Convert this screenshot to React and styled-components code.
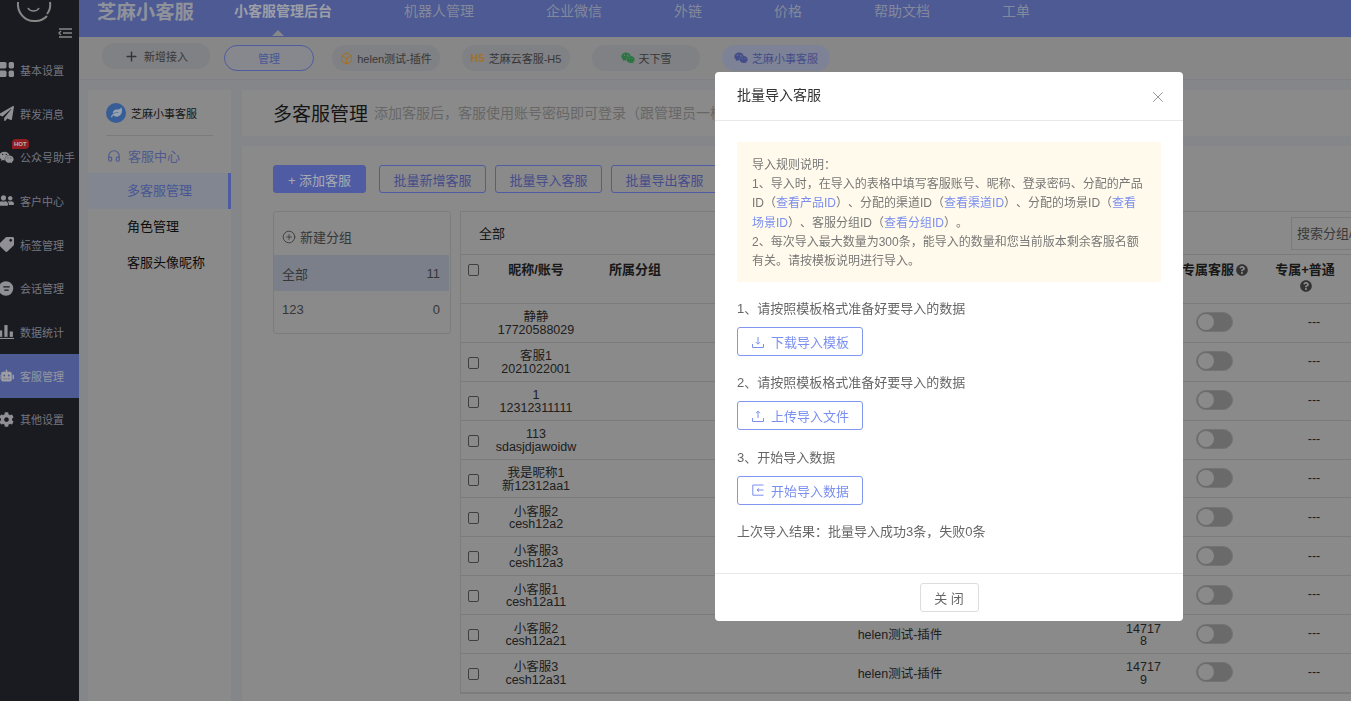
import React from 'react'
import styled, { createGlobalStyle } from 'styled-components'
import {
  FaPaperPlane, FaWeixin, FaUserFriends, FaTag, FaRobot, FaCog, FaLeaf, FaQuestionCircle,
} from 'react-icons/fa'
import { CirclePlus, Box, X, Headphones, Plus } from 'lucide-react'

const GlobalStyle = createGlobalStyle`
  html, body {
    margin: 0;
    height: 100%;
    overflow: hidden;
    font-family: "Liberation Sans", "Noto Sans CJK SC", sans-serif;
    color: #333;
    text-spacing-trim: space-all;
  }
  * { box-sizing: border-box; }
`

const Page = styled.div`
  display: flex;
  height: 100vh;
  overflow: hidden;
  background: #b8b8b8;
`

const Sidebar = styled.aside`
  width: 79px;
  flex: none;
  background: #23242b;
  overflow: hidden;
`

const SideLogo = styled.svg`
  display: block;
`

const MenuItem = styled.div`
  position: relative;
  display: flex;
  align-items: center;
  height: 43.7px;
  font-size: 11px;
  white-space: nowrap;
  color: ${p => (p.$active ? '#c4c8d8' : '#9a9daa')};
  background: ${p => (p.$active ? '#6779c5' : 'transparent')};

  svg {
    flex: none;
    width: 15px;
    height: 15px;
    margin: 0 6px 0 -1px;
    color: ${p => (p.$active ? '#d5d5d8' : '#c0c0c6')};
  }
`

const Hot = styled.span`
  position: absolute;
  left: 12px;
  top: 4px;
  padding: 1px 2px;
  border-radius: 4px 4px 4px 0;
  background: #c0282c;
  color: #eee;
  font-size: 6px;
  line-height: 8px;
  font-weight: 700;
`

const Main = styled.div`
  flex: 1;
  min-width: 0;
  display: flex;
  flex-direction: column;
`

const TopBar = styled.header`
  height: 37px;
  flex: none;
  display: flex;
  padding: 0 0 17px 18px;
  align-items: center;
  background: #6779c5;
  color: #c6c9d6;
`

const Brand = styled.div`
  font-size: 19.4px;
  font-weight: 700;
  margin-right: 40px;
  white-space: nowrap;
  color: #bfc2cf;
`

const NavLink = styled.a`
  position: relative;
  font-size: 14px;
  margin-right: 72px;
  white-space: nowrap;
  font-weight: ${p => (p.$active ? 700 : 400)};
  color: ${p => (p.$active ? '#d0d2de' : '#b0b6d0')};

  ${p => p.$active && `
    &::after {
      content: '';
      position: absolute;
      left: 38px;
      top: 30px;
      border: 6px solid transparent;
      border-top: 0;
      border-bottom-color: #b4b4b4;
    }
  `}
`

const TabBar = styled.div`
  height: 43px;
  flex: none;
  display: flex;
  align-items: flex-start;
  padding-left: 23px;
  background: #b4b4b4;
  border-bottom: 1px solid #a9aeb5;
`

const Pill = styled.div`
  display: flex;
  align-items: center;
  justify-content: center;
  gap: 4px;
  width: ${p => p.$width || 108}px;
  height: 26px;
  margin-top: ${p => p.$top ?? 8}px;
  margin-right: ${p => p.$after ?? 22}px;
  border-radius: 13px;
  font-size: 11px;
  white-space: nowrap;
  background: ${p => (p.$tone === 'selected' ? '#a7aec8' : '#abacb0')};
  color: ${p => (p.$tone === 'selected' ? '#5a67b8' : '#4a4a4a')};

  ${p => p.$outlined && `
    background: #b4b6bd;
    border: 1px solid #6a7ad8;
    color: #6273c8;
  `}

  & > svg.plus { margin-right: 1px; color: #444; }
`

const H5Mark = styled.span`
  color: #d69a3a;
  font-weight: 700;
  font-size: 11px;
`

const Body = styled.div`
  flex: 1;
  min-height: 0;
  display: flex;
  gap: 11px;
  padding: 10px 0 0 9px;
  background: #b0b3b8;
`

const SideNav = styled.nav`
  width: 143px;
  flex: none;
  background: #b8b8b8;
`

const Account = styled.div`
  display: flex;
  align-items: center;
  gap: 5px;
  height: 46px;
  margin: 0 18px;
  border-bottom: 1px solid #a3a5a8;
  font-size: 11px;
  white-space: nowrap;
  color: #222;
`

const LeafBadge = styled.span`
  width: 20px;
  height: 20px;
  border-radius: 50%;
  display: flex;
  align-items: center;
  justify-content: center;
  background: #4a7cc8;
  color: #c8d6e8;
  font-size: 11px;
`

const SideHeading = styled.div`
  display: flex;
  align-items: center;
  gap: 7px;
  height: 37px;
  padding: 2px 0 0 19px;
  font-size: 13px;
  color: #6a78c0;
`

const SideLink = styled.div`
  height: 36px;
  line-height: 36px;
  padding-left: 39px;
  font-size: 13px;
  color: ${p => (p.$active ? '#6273c8' : '#111')};
  background: ${p => (p.$active ? '#adb3c1' : 'transparent')};
  border-right: ${p => (p.$active ? '3px solid #6a7ad8' : '0')};
`

const Content = styled.div`
  flex: 1;
  min-width: 0;
  display: flex;
  flex-direction: column;
  gap: 10px;
`

const TitleCard = styled.div`
  height: 46px;
  flex: none;
  display: flex;
  align-items: center;
  gap: 6px;
  padding: 0 0 2px 31px;
  background: #b8b8b8;
  white-space: nowrap;
  overflow: hidden;
`

const Title = styled.h1`
  margin: 0;
  font-size: 19px;
  font-weight: 400;
  color: #1c1c1c;
`

const Subtitle = styled.span`
  font-size: 14px;
  color: #8a8a8a;
`

const Card = styled.div`
  flex: 1;
  min-height: 0;
  padding: 19px 0 0 31px;
  background: #b8b8b8;
  overflow: hidden;
`

const Actions = styled.div`
  display: flex;
  gap: 9px;
  margin-bottom: 18px;
`

const ActionButton = styled.button`
  height: 28px;
  width: ${p => (p.$primary ? 93 : 107)}px;
  margin-right: ${p => (p.$primary ? 4 : 0)}px;
  padding: 0;
  font: inherit;
  font-size: 13px;
  border-radius: 3px;
  border: 1px solid #6a7ad8;
  background: ${p => (p.$primary ? '#6a7ad8' : 'transparent')};
  color: ${p => (p.$primary ? '#dfe2ee' : '#5a67b8')};
`

const Panels = styled.div`
  display: flex;
  align-items: flex-start;
  gap: 9px;
`

const GroupPanel = styled.div`
  width: 178px;
  height: 123px;
  flex: none;
  border: 1px solid #a7a7a7;
  border-radius: 3px;
`

const NewGroup = styled.div`
  display: flex;
  align-items: center;
  gap: 4px;
  height: 43px;
  padding: 6px 0 0 8px;
  font-size: 13px;
  color: #4a4a4a;
`

const GroupRow = styled.div`
  display: flex;
  justify-content: space-between;
  align-items: center;
  height: 36px;
  margin-right: 1px;
  padding: 0 9px 0 8px;
  font-size: 13px;
  color: #4a4a4a;
  background: ${p => (p.$active ? '#a5aab9' : 'transparent')};
`

const TablePanel = styled.div`
  flex: 1;
  min-width: 0;
  border: 1px solid #a7a7a7;
  border-right: 0;
  overflow: hidden;
`

const TableTop = styled.div`
  height: 42px;
  display: flex;
  align-items: center;
  justify-content: space-between;
  padding: 0 0 2px 18px;
  font-size: 13px;
  color: #222;
`

const SearchInput = styled.input`
  width: 80px;
  height: 33px;
  flex: none;
  margin: 2px -20px 0 0;
  padding: 0 5px;
  background: transparent;
  border: 1px solid #a4a4a4;
  font: inherit;
  font-size: 13px;

  &::placeholder { color: #4e4e4e; opacity: 1; }
`

const Table = styled.table`
  width: 890px;
  table-layout: fixed;
  border-collapse: collapse;
  font-size: 12.5px;
`

const Th = styled.th`
  height: 49px;
  padding: 7px ${p => (p.$shift ? 6 : 0)}px 0 0;
  vertical-align: top;
  text-align: center;
  font-size: 13px;
  line-height: 16px;
  font-weight: 700;
  color: #222;
  border-top: 1px solid #a4a4a4;
  border-bottom: 1px solid #a4a4a4;
`

const Td = styled.td`
  height: 38.9px;
  padding: 2px ${p => (p.$narrow ? 4 : 0)}px 0 ${p => (p.$narrow ? 4 : 0)}px;
  text-align: center;
  line-height: 12.5px;
  color: #2a2a2a;
  border-bottom: 1px solid #a4a4a4;
  word-break: break-all;
`

const ToggleCell = styled(Td)`
  padding: 0 1px 1px 0;
`

const DashCell = styled(Td)`
  padding: 0 0 1px 12px;
`

const Check = styled.input.attrs({ type: 'checkbox' })`
  appearance: none;
  display: block;
  width: 11px;
  height: 12px;
  margin: ${p => (p.$head ? 2 : 0)}px 0 0 7px;
  border: 1px solid #555;
  border-radius: 2px;
  background: transparent;
`

const Hint = styled(FaQuestionCircle)`
  width: 12px;
  height: 12px;
  color: #444;
  vertical-align: -2px;
  margin-left: 2px;
`

const Toggle = styled.span`
  display: block;
  width: 37px;
  height: 20px;
  margin: 0 auto;
  padding: 1px;
  border-radius: 10px;
  background: #8e8e8e;
  border: 1px solid #9a9a9a;

  &::before {
    content: '';
    display: block;
    width: 16px;
    height: 16px;
    border-radius: 50%;
    background: #b8b8b8;
  }
`

const Mask = styled.div`
  position: fixed;
  inset: 0;
  padding: 72px 0 0 715px;
  background: rgba(0, 0, 0, 0.25);
`

const Modal = styled.div`
  width: 468px;
  height: 549px;
  display: flex;
  flex-direction: column;
  border-radius: 4px;
  background: #fff;
  overflow: hidden;
`

const ModalHead = styled.div`
  display: flex;
  align-items: center;
  justify-content: space-between;
  height: 49px;
  flex: none;
  padding: 0 16px 4px 22px;
  border-bottom: 1px solid #e8e8e8;
  font-size: 14px;
  color: #333;

  svg { width: 18px; height: 18px; margin-top: 5px; color: #8a8a8a; }
`

const ModalBody = styled.div`
  flex: 1;
  padding: 21px 22px 0;
`

const Notice = styled.div`
  height: 140px;
  padding: 14px 15px 0;
  margin-bottom: 18px;
  background: #fffaeb;
  font-size: 12px;
  line-height: 19.2px;
  color: #777;
`

const Link = styled.a`
  color: #7b8ff0;
`

const StepText = styled.div`
  font-size: 13px;
  line-height: 18px;
  color: #666;
`

const StepButton = styled.button`
  display: flex;
  align-items: center;
  gap: 7px;
  width: 126px;
  height: 29px;
  margin: 9px 0 18.3px;
  padding: 0 0 0 14px;
  background: #fff;
  border: 1px solid #8096f0;
  border-radius: 3px;
  font: inherit;
  font-size: 13px;
  white-space: nowrap;
  color: #7b8ff0;

  svg { width: 12px; height: 12px; flex: none; }
`

const ModalFoot = styled.div`
  height: 48px;
  flex: none;
  display: flex;
  justify-content: center;
  padding-top: 9px;
  border-top: 1px solid #e8e8e8;
`

const CloseButton = styled.button`
  width: 59px;
  height: 29px;
  background: #fff;
  border: 1px solid #ddd;
  border-radius: 3px;
  font: inherit;
  font-size: 13px;
  color: #666;
`

const GridIcon = () => (
  <svg viewBox="0 0 14 14" fill="currentColor">
    <rect x="-1" y="0" width="8" height="6" rx="1.5" />
    <rect x="-1" y="8" width="8" height="6" rx="1.5" />
    <rect x="9" y="0" width="5" height="6" rx="1.5" />
    <rect x="9" y="8" width="5" height="6" rx="1.5" />
  </svg>
)

const ChatIcon = () => (
  <svg viewBox="0 0 14 14">
    <circle cx="6.5" cy="7" r="6.8" fill="currentColor" />
    <path d="M4 5.5h6M5 8.5h4" stroke="#23242b" strokeWidth="1.2" />
  </svg>
)

const ChartIcon = () => (
  <svg viewBox="0 0 14 14" fill="currentColor">
    <rect x="0" y="6" width="3" height="6" />
    <rect x="5" y="1" width="3" height="11" />
    <rect x="10" y="7" width="3" height="5" />
    <rect x="0" y="13" width="14" height="1" />
  </svg>
)

const DownloadIcon = () => (
  <svg viewBox="0 0 12 12" fill="none" stroke="currentColor">
    <path d="M.5 8v3.5h11V8M6 1v7M4 6.2 6 8.2l2-2" />
  </svg>
)

const UploadIcon = () => (
  <svg viewBox="0 0 12 12" fill="none" stroke="currentColor">
    <path d="M.5 8v3.5h11V8M6 8V1.2M4 3.2l2-2 2 2" />
  </svg>
)

const ImportIcon = () => (
  <svg viewBox="0 0 12 12" fill="none" stroke="currentColor">
    <path d="M11.5 1H.8v10.2h10.7M11.5 6H5M7 4.4 5 6l2 1.6" />
  </svg>
)

const menu = [
  { label: '基本设置', icon: <GridIcon /> },
  { label: '群发消息', icon: <FaPaperPlane /> },
  { label: '公众号助手', icon: <FaWeixin />, hot: true },
  { label: '客户中心', icon: <FaUserFriends /> },
  { label: '标签管理', icon: <FaTag style={{ transform: 'scaleX(-1)' }} /> },
  { label: '会话管理', icon: <ChatIcon /> },
  { label: '数据统计', icon: <ChartIcon /> },
  { label: '客服管理', icon: <FaRobot />, active: true },
  { label: '其他设置', icon: <FaCog /> },
]

const links = ['机器人管理', '企业微信', '外链', '价格', '帮助文档', '工单']

// the modal hides the middle columns of the first rows
const rows = [
  { name: '静静', account: '17720588029', noCheck: true },
  { name: '客服1', account: '2021022001' },
  { name: '1', account: '12312311111' },
  { name: '113', account: 'sdasjdjawoidw' },
  { name: '我是昵称1', account: '新12312aa1' },
  { name: '小客服2', account: 'cesh12a2' },
  { name: '小客服3', account: 'cesh12a3' },
  { name: '小客服1', account: 'cesh12a11' },
  { name: '小客服2', account: 'cesh12a21', group: 'helen测试-插件', id: '147178' },
  { name: '小客服3', account: 'cesh12a31', group: 'helen测试-插件', id: '147179' },
]

const colWidths = [26, 98, 100, 130, 170, 137, 43, 100, 86]

export default function App() {
  return (
    <Page>
      <GlobalStyle />
      <Sidebar>
        <SideLogo width="79" height="48" viewBox="0 0 79 48" fill="none" stroke="#b4b4b4">
          <path d="M18 2a16 17 0 0 0 16 19 16 16 0 0 0 13-5" strokeWidth="2" />
          <path d="M47 14a15 15 0 0 0 3-12" strokeWidth="2" />
          <path d="M28 8c2 4 9 4 11 0" strokeWidth="1.6" />
          <path d="M59 29h13M63 33h9M59 37h13M61 31l-2 2 2 2" strokeWidth="1.4" />
        </SideLogo>
        {menu.map(m => (
          <MenuItem key={m.label} $active={m.active}>
            {m.icon}
            {m.label}
            {m.hot && <Hot>HOT</Hot>}
          </MenuItem>
        ))}
      </Sidebar>
      <Main>
        <TopBar>
          <Brand>芝麻小客服</Brand>
          <NavLink $active>小客服管理后台</NavLink>
          {links.map(l => <NavLink key={l}>{l}</NavLink>)}
        </TopBar>
        <TabBar>
          <Pill $top={6} $after={14}><Plus className="plus" size={15} strokeWidth={2.2} />新增接入</Pill>
          <Pill $width={90} $outlined $after={18}>管理</Pill>
          <Pill><Box size={13} color="#d69a3a" />helen测试-插件</Pill>
          <Pill><H5Mark>H5</H5Mark>芝麻云客服-H5</Pill>
          <Pill><FaWeixin size={14} color="#3b9c5a" />天下雪</Pill>
          <Pill $tone="selected"><FaWeixin size={14} color="#5a67b8" />芝麻小事客服</Pill>
        </TabBar>
        <Body>
          <SideNav>
            <Account><LeafBadge><FaLeaf /></LeafBadge>芝麻小事客服</Account>
            <SideHeading><Headphones size={14} />客服中心</SideHeading>
            <SideLink $active>多客服管理</SideLink>
            <SideLink>角色管理</SideLink>
            <SideLink>客服头像昵称</SideLink>
          </SideNav>
          <Content>
            <TitleCard>
              <Title>多客服管理</Title>
              <Subtitle>添加客服后，客服使用账号密码即可登录（跟管理员一样</Subtitle>
            </TitleCard>
            <Card>
              <Actions>
                <ActionButton $primary>+ 添加客服</ActionButton>
                <ActionButton>批量新增客服</ActionButton>
                <ActionButton>批量导入客服</ActionButton>
                <ActionButton>批量导出客服</ActionButton>
              </Actions>
              <Panels>
                <GroupPanel>
                  <NewGroup><CirclePlus size={14} strokeWidth={1.4} />新建分组</NewGroup>
                  <GroupRow $active><span>全部</span><span>11</span></GroupRow>
                  <GroupRow><span>123</span><span>0</span></GroupRow>
                </GroupPanel>
                <TablePanel>
                  <TableTop>
                    全部
                    <SearchInput placeholder="搜索分组/账号" />
                  </TableTop>
                  <Table>
                    <colgroup>
                      {colWidths.map((w, i) => <col key={i} width={w} />)}
                    </colgroup>
                    <thead>
                      <tr>
                        <Th><Check $head /></Th>
                        <Th>昵称/账号</Th>
                        <Th>所属分组</Th>
                        <Th />
                        <Th />
                        <Th />
                        <Th />
                        <Th>专属客服<Hint /></Th>
                        <Th $shift>专属+普通<br /><Hint /></Th>
                      </tr>
                    </thead>
                    <tbody>
                      {rows.map(r => (
                        <tr key={r.account}>
                          <Td>{!r.noCheck && <Check />}</Td>
                          <Td>{r.name}<br />{r.account}</Td>
                          <Td />
                          <Td />
                          <Td>{r.group}</Td>
                          <Td />
                          <Td $narrow>{r.id}</Td>
                          <ToggleCell><Toggle /></ToggleCell>
                          <DashCell>---</DashCell>
                        </tr>
                      ))}
                    </tbody>
                  </Table>
                </TablePanel>
              </Panels>
            </Card>
          </Content>
        </Body>
      </Main>
      <Mask>
        <Modal>
          <ModalHead>批量导入客服<X strokeWidth={1.2} /></ModalHead>
          <ModalBody>
            <Notice>
              导入规则说明：<br />
              1、导入时，在导入的表格中填写客服账号、昵称、登录密码、分配的产品ID（<Link>查看产品ID</Link>）、分配的渠道ID（<Link>查看渠道ID</Link>）、分配的场景ID（<Link>查看场景ID</Link>）、客服分组ID（<Link>查看分组ID</Link>）。<br />
              2、每次导入最大数量为300条，能导入的数量和您当前版本剩余客服名额有关。请按模板说明进行导入。
            </Notice>
            <StepText>1、请按照模板格式准备好要导入的数据</StepText>
            <StepButton><DownloadIcon />下载导入模板</StepButton>
            <StepText>2、请按照模板格式准备好要导入的数据</StepText>
            <StepButton><UploadIcon />上传导入文件</StepButton>
            <StepText>3、开始导入数据</StepText>
            <StepButton><ImportIcon />开始导入数据</StepButton>
            <StepText>上次导入结果：批量导入成功3条，失败0条</StepText>
          </ModalBody>
          <ModalFoot><CloseButton>关 闭</CloseButton></ModalFoot>
        </Modal>
      </Mask>
    </Page>
  )
}
